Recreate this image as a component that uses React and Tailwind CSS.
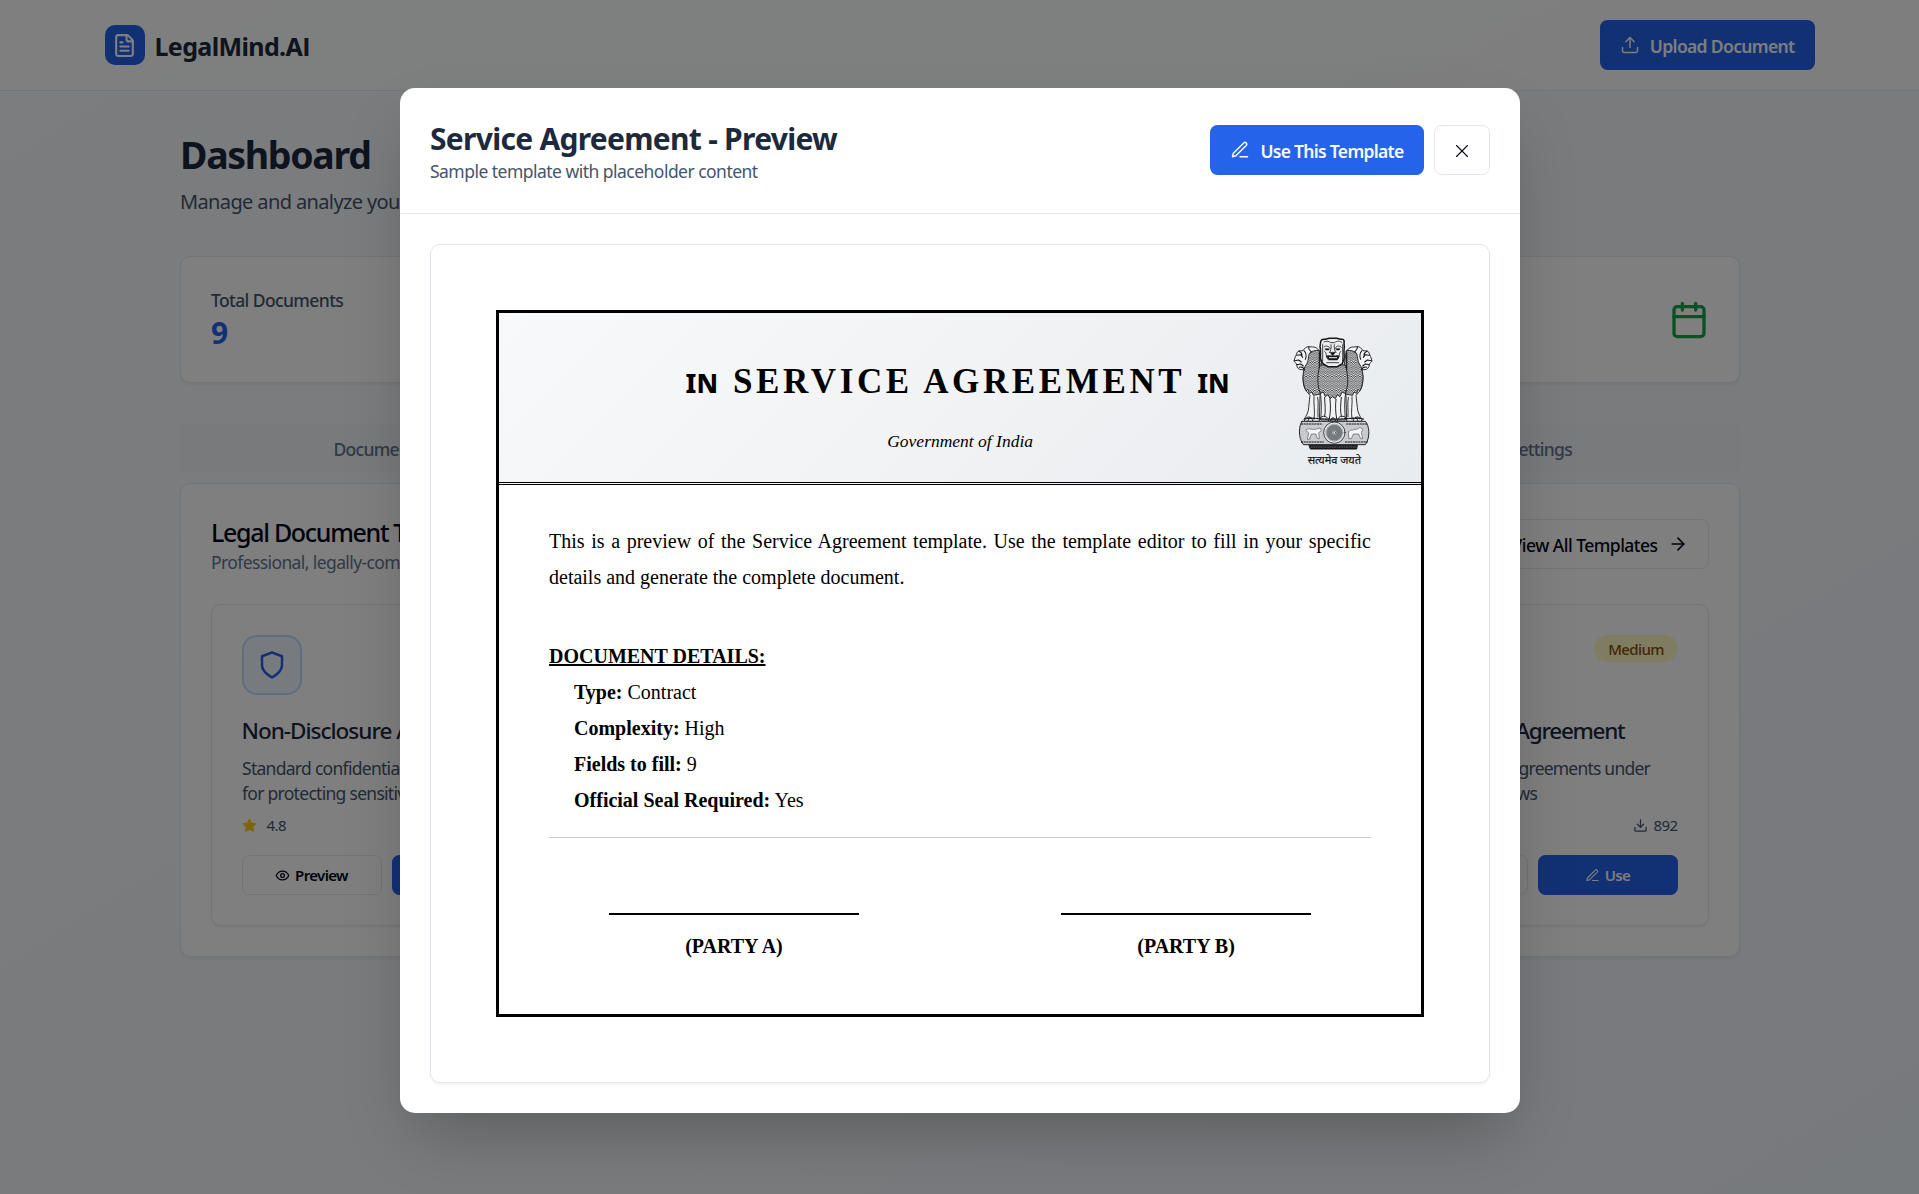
import React from "react";
import { FileText, Upload, ArrowRight, X } from "lucide-react";

function Icon({ className, children, strokeWidth = 2 }) {
  return (
    <svg viewBox="0 0 24 24" fill="none" stroke="currentColor" strokeWidth={strokeWidth} strokeLinecap="round" strokeLinejoin="round" className={className}>
      {children}
    </svg>
  );
}

const Pen = ({ className }) => (
  <Icon className={className} strokeWidth={1.8}>
    <path d="M12 20h9" />
    <path d="M16.5 3.5a2.12 2.12 0 0 1 3 3L7 19l-4 1 1-4Z" />
  </Icon>
);
const Eye = ({ className }) => (
  <Icon className={className}>
    <path d="M2 12s3-7 10-7 10 7 10 7-3 7-10 7-10-7-10-7Z" />
    <circle cx="12" cy="12" r="3" />
  </Icon>
);
const Shield = ({ className }) => (
  <Icon className={className}>
    <path d="M12 22s8-4 8-10V5l-8-3-8 3v7c0 6 8 10 8 10" />
  </Icon>
);
const Calendar = ({ className }) => (
  <Icon className={className}>
    <rect width="18" height="18" x="3" y="4" rx="2" />
    <path d="M16 2v4M8 2v4M3 10h18" />
  </Icon>
);
const Download = ({ className }) => (
  <Icon className={className}>
    <path d="M21 15v4a2 2 0 0 1-2 2H5a2 2 0 0 1-2-2v-4" />
    <path d="m7 10 5 5 5-5M12 15V3" />
  </Icon>
);
const Star = ({ className }) => (
  <svg viewBox="0 0 24 24" className={className} fill="#facc15" stroke="#facc15" strokeWidth="2" strokeLinejoin="round">
    <path d="m12 2 3.09 6.26L22 9.27l-5 4.87 1.18 6.88L12 17.77l-6.18 3.25L7 14.14 2 9.27l6.91-1.01z" />
  </svg>
);

function SideLion() {
  return (
    <g>
      <path fill="#f2f3f5" d="M118 92C112 84 104 80 97 81L86 80C78 80 73 86 69 92L57 93C49 95 51 103 46 110L42 123C44 129 50 128 50 134C50 143 57 150 66 149L74 150C66 168 68 196 78 212L90 226L86 262C86 276 78 290 72 298L74 304H118L120 226L122 214Z" />
      <path fill="url(#mane)" d="M118 92C108 90 96 92 88 100C84 112 86 122 80 132C66 146 66 192 78 212L84 208L88 220L96 216L100 226L122 222L126 140Z" />
      <path d="M57 93C62 96 66 100 66 106M50 106L62 104L68 112M44 122L56 120L64 126M50 134L62 132L70 138M72 92C78 98 80 108 76 118M86 80C84 88 90 92 94 96M58 142C64 140 70 142 74 150" strokeWidth="3.2" />
      <path d="M102 230C100 252 106 272 102 298M90 292L84 302M78 294C86 288 96 290 98 302M113 232C117 250 112 276 114 290" strokeWidth="2.6" />
      <path d="M118 98V150" strokeWidth="3.5" />
    </g>
  );
}

function Emblem({ className }) {
  return (
    <svg viewBox="0 0 330 450" className={className} fill="none" stroke="#15171a" strokeWidth="2.6" strokeLinecap="round" strokeLinejoin="round">
      <defs>
        <pattern id="mane" width="13" height="14" patternUnits="userSpaceOnUse">
          <rect width="13" height="14" fill="#e4e6e8" stroke="none" />
          <path d="M0 0L6.500 8L13 0M0 7L6.500 15L13 7M6.500 -6V1" stroke="#1d1f22" strokeWidth="2.5" />
        </pattern>
        <pattern id="relief" width="12" height="10" patternUnits="userSpaceOnUse">
          <rect width="12" height="10" fill="#dfe1e4" stroke="none" />
          <path d="M0 3C3 0 6 6 12 2M2 8C6 5 8 10 11 7" stroke="#7a7e83" strokeWidth="1.4" />
        </pattern>
      </defs>
      <SideLion />
      <g transform="translate(318 0) scale(-1 1)"><SideLion /></g>
      <path fill="#f2f3f5" d="M120 214C126 250 124 270 122 300H196C194 268 192 240 198 214Z" />
      <path fill="url(#mane)" d="M120 136C110 166 112 204 122 220L130 216L136 230L144 224L150 236L158 230L166 236L172 224L180 230L186 216L194 220C206 204 206 166 196 136Z" />
      <path d="M150 238C152 258 152 276 148 296M168 238C166 256 166 276 170 296M134 232C134 252 138 272 134 290M184 232C182 252 180 272 184 290M122 292C132 284 144 290 146 302M172 302C174 290 186 284 196 292M152 302C152 290 166 290 166 302" strokeWidth="2.8" />
      <path fill="#eceef0" d="M122 66C122 58 130 57 136 58L148 55H170L182 58C190 56 194 60 192 68L193 82C190 94 194 106 192 118L186 132L172 140H144L130 132L122 118C120 102 124 92 120 80Z" strokeWidth="4.5" />
      <path d="M132 66C140 62 148 64 152 68H164C170 62 180 62 186 68M128 74V122M188 74V122M133 80C138 76 146 78 150 84M166 84C170 76 180 76 184 82M153 74C155 84 152 92 148 98M163 74C161 84 164 92 168 98M134 94C142 98 136 108 142 116M182 94C176 98 180 108 174 116M140 128H176" strokeWidth="2.4" />
      <path fill="#15171a" d="M151 97H166L160 105H156ZM140 108C148 104 154 110 158 106C162 110 170 104 178 108L172 120H146ZM136 86H148L146 90H138ZM168 86H180L178 90H170Z" strokeWidth="1.5" />
      <path stroke="#eceef0" d="M148 113H170" strokeWidth="3" />
      <path d="M74 297C100 291 126 299 158 297C192 299 220 291 250 297" strokeWidth="4" strokeDasharray="5 4" />
      <path fill="url(#relief)" d="M66 304H256C268 316 272 352 256 374H70C54 352 56 318 66 304Z" strokeWidth="2.8" />
      <path d="M64 312H126M200 312H262M64 366H130M196 366H262" strokeWidth="3" strokeDasharray="4 4" />
      <path fill="#f4f5f6" stroke="#4a4d52" d="M78 330C86 322 92 330 106 328L120 324L124 332L116 338L118 356H112L108 342H94L88 358H82L86 340ZM206 334C214 326 232 332 240 322L248 328L244 338L248 356H242L236 342H220L214 356H208Z" strokeWidth="1.8" />
      <circle cx="163" cy="338" r="32" fill="#eceef0" strokeWidth="2.4" />
      <circle cx="163" cy="338" r="26" stroke="#8b8f94" strokeWidth="2" />
      <circle cx="163" cy="338" r="15" stroke="#777b80" strokeWidth="18" strokeDasharray="1.6 3.110" />
      <circle cx="163" cy="338" r="4" fill="#eceef0" stroke="#3c3f43" strokeWidth="2" />
      <path fill="#15171a" d="M88 376H232L230 387H92Z" strokeWidth="3" />
      <path stroke="#8d9196" d="M94 381H228" strokeWidth="2" strokeDasharray="3 4" />
      <text x="163" y="431" textAnchor="middle" fontSize="33" fontFamily="Noto Sans, sans-serif" fill="#15171a" stroke="#15171a" strokeWidth="0.6">सत्यमेव जयते</text>
    </svg>
  );
}

function TemplateCard({ className, title, titleClass, desc, descClass, rating, downloads, badge }) {
  return (
    <div className={`flex flex-col rounded-lg border border-slate-200 bg-white p-6 shadow-xs ${className}`}>
      <div className="flex items-start justify-between">
        <div className="flex h-12 w-12 items-center justify-center rounded-xl border-2 border-[#bfdbfe] bg-[#eff6ff] text-[#2563eb]">
          <Shield className="h-6 w-6" />
        </div>
        {badge && (
          <span className="rounded-full bg-[#fef9c3] px-[11px] pt-[3.5px] pb-[2.5px] text-xs leading-4 font-[550] tracking-[-0.5px] text-[#854d0e]">{badge}</span>
        )}
      </div>
      <h3 className={`mt-[18px] text-lg leading-[22.4px] font-[550] whitespace-nowrap text-slate-800 ${titleClass}`}>{title}</h3>
      <p className={`mt-[8.4px] pl-[0.4px] text-sm leading-5 whitespace-nowrap text-slate-600 ${descClass}`}>
        {desc[0]}
        <br />
        {desc[1]}
      </p>
      <div className="mt-[7.4px] flex items-center justify-between text-xs leading-4 tracking-[-0.45px] text-slate-600">
        <span className="flex items-center gap-2">
          {rating && <Star className="h-3 w-3" />}
          {rating}
        </span>
        {downloads && (
          <span className="flex items-center gap-1">
            <Download className="h-3 w-3" />
            {downloads}
          </span>
        )}
      </div>
      <div className="mt-4 grid grid-cols-2 gap-2 text-xs font-semibold tracking-[-0.5px]">
        <div className="flex h-8 items-center justify-center gap-1 rounded-md border border-slate-200 bg-white text-slate-950">
          {rating && <Eye className="h-3 w-3" />}
          {rating && "Preview"}
        </div>
        <div className="flex h-8 items-center justify-center gap-1 rounded-md bg-[#2563eb] text-slate-50">
          {downloads && <Pen className="h-3 w-3" />}
          {downloads && "Use"}
        </div>
      </div>
    </div>
  );
}

const templates = [
  { title: "Non-Disclosure A", titleClass: "tracking-[-0.8px]", descClass: "tracking-[-0.57px]", desc: ["Standard confidential", "for protecting sensitive"], rating: "4.8" },
  { className: "col-start-4", title: "Employment Agreement", titleClass: "tracking-[-1.02px]", descClass: "tracking-[-0.63px]", desc: ["All employment agreements under", "relevant Indian laws"], downloads: "892", badge: "Medium" },
];

function Dashboard() {
  return (
    <div className="h-full bg-linear-to-br from-slate-50 to-[#eff4fb]">
      <header className="border-b border-slate-200 bg-white/80">
        <div className="mx-auto flex max-w-[1400px] items-center justify-between px-4 py-4">
          <div className="flex items-center gap-2">
            <div className="flex h-8 w-8 items-center justify-center rounded-lg bg-[#2563eb]">
              <FileText className="h-5 w-5 text-white" />
            </div>
            <span className="pt-[3px] text-xl leading-7 font-bold tracking-[-0.5px] text-slate-800">
              LegalMind.A<span className="font-['Open_Sans']">I</span>
            </span>
          </div>
          <div className="flex h-10 items-center gap-2 rounded-md bg-[#2563eb] px-4 text-sm font-semibold tracking-[-0.52px] text-slate-50">
            <Upload className="h-4 w-4" strokeWidth={1.8} />
            <span className="pt-0.5">Upload Document</span>
          </div>
        </div>
      </header>
      <main className="mx-auto max-w-7xl px-4 pt-8">
        <h1 className="relative top-px pl-[0.4px] text-3xl leading-9 font-bold tracking-[-1.05px] text-slate-800">Dashboard</h1>
        <p className="relative top-px mt-2 pl-[0.4px] text-base leading-6 tracking-[-0.5px] text-slate-600">Manage and analyze your</p>
        <div className="mt-8 flex h-[101.4px] items-center justify-between rounded-lg border border-slate-200 bg-white px-6 shadow-xs">
          <div className="pt-px pl-[0.4px]">
            <p className="text-sm leading-5 font-[550] tracking-[-0.48px] text-slate-600">Total Documents</p>
            <p className="relative top-px text-2xl leading-[31px] font-bold text-[#2563eb]">9</p>
          </div>
          <Calendar className="relative top-[0.4px] h-8 w-8 text-[#16a34a]" />
        </div>
        <div className="mt-8 grid h-10 grid-cols-4 items-center rounded-md bg-slate-100 px-1 pt-[2.4px] text-center text-sm font-[550] tracking-[-0.56px] text-slate-500">
          <span>Documents</span>
          <span className="col-start-4">Settings</span>
        </div>
        <section className="mt-2 rounded-lg border border-slate-200 bg-white p-6 shadow-xs">
          <div className="flex items-center justify-between">
            <div className="relative top-px pl-[0.4px]">
              <h2 className="text-xl leading-7 font-[550] tracking-[-1.05px] text-slate-950">Legal Document Te</h2>
              <p className="text-sm leading-5 tracking-[-0.48px] text-slate-500">Professional, legally-comp</p>
            </div>
            <div className="flex h-10 items-center gap-2 rounded-md border border-slate-200 px-4 text-sm font-[550] tracking-[-0.42px] text-slate-950">
              <span className="pt-0.5">View All Templates</span>
              <ArrowRight className="h-4 w-4" />
            </div>
          </div>
          <div className="mt-6 grid grid-cols-4 gap-6">
            {templates.map((t) => (
              <TemplateCard key={t.title} {...t} />
            ))}
          </div>
        </section>
      </main>
    </div>
  );
}

function Signature({ label }) {
  return (
    <div className="flex w-[45%] flex-col items-center">
      <div className="w-[200px] border-t-2 border-black" />
      <p className="mt-[10.4px] font-bold">{label}</p>
    </div>
  );
}

const details = [
  ["Type:", "Contract"],
  ["Complexity:", "High"],
  ["Fields to fill:", "9"],
  ["Official Seal Required:", "Yes"],
];

function Agreement() {
  return (
    <div className="h-[565.6px] border-3 border-black bg-white font-['Liberation_Serif',serif] text-base leading-[28.8px] text-black">
      <div className="relative h-[137.6px] border-b-3 border-double border-black bg-linear-135 from-[#f8f9fa] to-[#e9ecef] pt-[34.4px] text-center">
        <div className="flex items-baseline justify-center pr-[3px] text-[28px] leading-[42px] font-bold">
          <span className="mr-3 font-['Noto_Sans'] text-[21px] font-extrabold">IN</span>
          <span className="tracking-[2.9px]">SERVICE AGREEMENT</span>
          <span className="ml-[9.5px] font-['Noto_Sans'] text-[21px] font-extrabold">IN</span>
        </div>
        <p className="mt-[15.8px] pl-px text-sm leading-5 italic">Government of India</p>
        <Emblem className="absolute top-[5.6px] right-[24.8px] h-[120px] w-[88px]" />
      </div>
      <div className="pt-[30px] pr-[39.6px] pl-[40.4px]">
        <p className="text-justify">
          This is a preview of the Service Agreement template. Use the template editor to fill in your specific details and generate the complete document.
        </p>
        <p className="mt-[35px] font-bold underline">DOCUMENT DETAILS:</p>
        <div className="pl-5">
          {details.map(([k, v]) => (
            <p key={k}>
              <b>{k}</b> {v}
            </p>
          ))}
        </div>
        <div className="mt-[15px] border-t border-[#ccc]" />
        <div className="mt-[60px] flex justify-between">
          <Signature label="(PARTY A)" />
          <Signature label="(PARTY B)" />
        </div>
      </div>
    </div>
  );
}

export default function App() {
  return (
    <div className="relative h-[955.2px] overflow-hidden font-['Noto_Sans',sans-serif] [zoom:1.25]">
      <Dashboard />
      <div className="absolute inset-0 flex items-start justify-center bg-black/50 pt-[70.4px]">
        <div className="w-[896px] rounded-xl bg-white shadow-2xl">
          <div className="flex items-start justify-between border-b border-slate-200 p-6">
            <div className="pt-[0.8px] pl-[0.4px]">
              <h2 className="text-2xl leading-8 font-bold tracking-[-0.57px] text-slate-800">Service Agreement - Preview</h2>
              <p className="-mb-[0.8px] text-sm leading-5 tracking-[-0.42px] text-slate-600">Sample template with placeholder content</p>
            </div>
            <div className="flex gap-2 pt-[5.6px]">
              <div className="flex h-10 items-center gap-2 rounded-md bg-[#2563eb] px-4 text-sm font-semibold tracking-[-0.56px] text-slate-50">
                <Pen className="h-4 w-4" />
                <span className="pt-0.5">Use This Template</span>
              </div>
              <div className="flex h-10 w-[44.8px] items-center justify-center rounded-md border border-slate-200 pt-0.5 text-slate-950">
                <X className="h-[17.6px] w-[17.6px]" strokeWidth={1.2} />
              </div>
            </div>
          </div>
          <div className="p-6">
            <div className="rounded-lg border border-slate-200 bg-white p-[52px] shadow-xs">
              <Agreement />
            </div>
          </div>
        </div>
      </div>
    </div>
  );
}
